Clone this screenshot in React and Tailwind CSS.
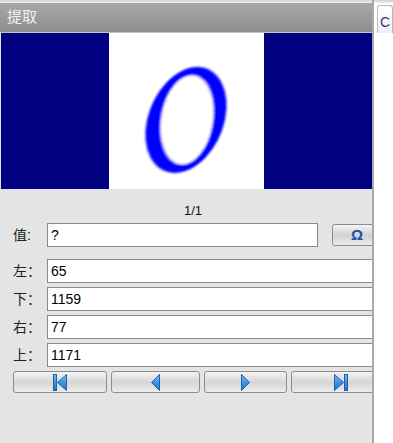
import React from "react";

const font = { fontFamily: '"Liberation Sans", "Noto Sans CJK SC", sans-serif' };

function Tri({ dir = "left", bar = false }) {
  const id = "g" + dir + (bar ? "b" : "");
  const grad = (
    <defs>
      <linearGradient id={id} x1="0" y1="0" x2="0" y2="1">
        <stop offset="0" stopColor="#7cc0f5" />
        <stop offset="0.5" stopColor="#3f93e0" />
        <stop offset="1" stopColor="#2a73c8" />
      </linearGradient>
    </defs>
  );
  const fill = `url(#${id})`;
  if (dir === "left") {
    return (
      <svg width={bar ? 14 : 9} height="17" viewBox={bar ? "0 0 14 17" : "0 0 9 17"}>
        {grad}
        {bar && <rect x="0.5" y="0.5" width="3" height="16" fill={fill} stroke="#1d5fae" />}
        <polygon
          points={bar ? "4.5,8.5 13.5,0.5 13.5,16.5" : "0.5,8.5 8.5,0.5 8.5,16.5"}
          fill={fill}
          stroke="#1d5fae"
          strokeLinejoin="round"
        />
      </svg>
    );
  }
  return (
    <svg width={bar ? 14 : 9} height="17" viewBox={bar ? "0 0 14 17" : "0 0 9 17"}>
      {grad}
      <polygon
        points={bar ? "0.5,0.5 9.5,8.5 0.5,16.5" : "0.5,0.5 8.5,8.5 0.5,16.5"}
        fill={fill}
        stroke="#1d5fae"
        strokeLinejoin="round"
      />
      {bar && <rect x="10.5" y="0.5" width="3" height="16" fill={fill} stroke="#1d5fae" />}
    </svg>
  );
}

function NavBtn({ w, children }) {
  return (
    <div
      className="h-[22px] shrink-0 rounded-[3px] border border-[#8c8c8c] bg-gradient-to-b from-[#f4f4f4] via-[#d6d6d6] to-[#ececec] flex items-center justify-center"
      style={{ width: w }}
    >
      {children}
    </div>
  );
}

function Row({ label, value }) {
  return (
    <div className="flex items-center h-[24px]">
      <div className="w-[47px] pl-[13px] text-[14px] text-[#222]" style={font}>
        {label}
      </div>
      <div className="flex-1 h-[24px] bg-white border border-[#8a8a8a] flex items-center pl-[3px] text-[14px] text-black" style={font}>
        {value}
      </div>
    </div>
  );
}

function Glyph() {
  return (
    <svg width="155" height="156" viewBox="0 0 155 156">
      <defs>
        <filter id="soft" x="-10%" y="-10%" width="120%" height="120%">
          <feGaussianBlur stdDeviation="0.9" />
        </filter>
      </defs>
      <g filter="url(#soft)" transform="translate(77 87) skewX(-12)">
        <ellipse cx="0" cy="0" rx="39" ry="53" fill="#0000ff" />
        <g transform="rotate(-9)">
          <ellipse cx="1" cy="0" rx="26" ry="45" fill="#ffffff" />
        </g>
      </g>
    </svg>
  );
}

export default function App() {
  return (
    <div className="w-[393px] h-[443px] flex bg-white overflow-hidden" style={font}>
      <div className="w-[372px] h-full bg-[#e4e4e4] flex flex-col overflow-hidden shrink-0">
        <div className="h-[3px] bg-gradient-to-b from-[#d0d0d0] to-[#f2f2f2] shrink-0" />
        <div className="h-[30px] shrink-0 bg-gradient-to-b from-[#a8a8a8] via-[#9a9a9a] to-[#8e8e8e] border-b border-[#c4c4c4] flex items-center pl-[7px] text-[15px] text-[#f2f2f2]">
          提取
        </div>
        <div className="h-[156px] shrink-0 flex pl-[1px]">
          <div className="w-[108px] bg-[#000080]" />
          <div className="w-[155px] bg-white">
            <Glyph />
          </div>
          <div className="flex-1 bg-[#000080]" />
        </div>
        <div className="w-[386px] shrink-0 flex flex-col">
          <div className="h-[30px] flex items-center justify-center text-[13px] text-[#111] pt-[14px]">1/1</div>
          <div className="flex items-center h-[24px] mt-[4px]">
            <div className="w-[47px] pl-[13px] text-[14px] text-[#222]">值:</div>
            <div className="w-[271px] h-[24px] bg-white border border-[#8a8a8a] flex items-center pl-[3px] text-[14px] text-black">
              ?
            </div>
            <div className="ml-[14px] w-[48px] h-[22px] rounded-[3px] border border-[#8c8c8c] bg-gradient-to-b from-[#f4f4f4] via-[#d2d2d2] to-[#ececec] flex items-center justify-end pr-[16px] text-[15px] font-bold text-[#1e4fa8]">
              Ω
            </div>
          </div>
          <div className="mt-[12px] flex flex-col gap-[4px]">
            <Row label="左：" value="65" />
            <Row label="下：" value="1159" />
            <Row label="右：" value="77" />
            <Row label="上：" value="1171" />
          </div>
          <div className="mt-[4px] flex gap-[4px] pl-[13px]">
            <NavBtn w={94}>
              <Tri dir="left" bar />
            </NavBtn>
            <NavBtn w={89}>
              <Tri dir="left" />
            </NavBtn>
            <NavBtn w={83}>
              <Tri dir="right" />
            </NavBtn>
            <NavBtn w={99}>
              <Tri dir="right" bar />
            </NavBtn>
          </div>
        </div>
      </div>
      <div className="flex-1 h-full flex">
        <div className="w-[2px] h-full bg-[#a8a8a8] shrink-0" />
        <div className="flex-1 h-full bg-white flex flex-col">
          <div className="h-[3px] bg-gradient-to-b from-[#d0d0d0] to-[#f2f2f2]" />
          <div className="h-[28px] ml-[3px] mt-[2px] border border-b-0 border-[#b8b8b8] rounded-t-[3px] bg-gradient-to-b from-white to-[#f0f0f0] pl-[2px] pt-[6px] text-[14px] text-[#1a3d8f] overflow-hidden whitespace-nowrap">
            C
          </div>
        </div>
      </div>
    </div>
  );
}
